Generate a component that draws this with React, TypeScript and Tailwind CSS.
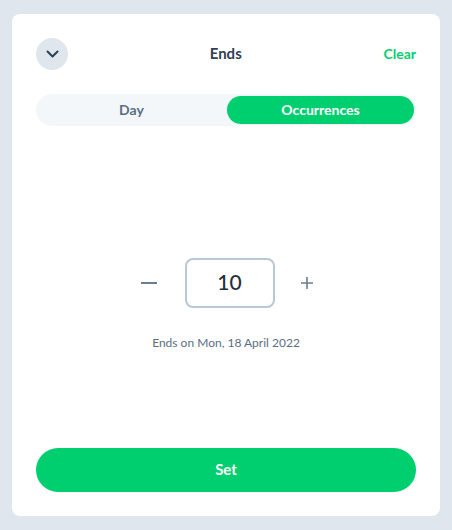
import React, { useState } from 'react';

const App: React.FC = () => {
  const [mode, setMode] = useState<'day' | 'occurrences'>('occurrences');
  const [count, setCount] = useState(10);

  return (
    <div
      className="min-h-screen bg-[#dfe6ee] px-3 py-[14px]"
      style={{ fontFamily: 'Lato, "Open Sans", sans-serif' }}
    >
      <div className="flex h-[502px] flex-col rounded-lg bg-white p-6">
        {/* Header */}
        <div className="flex h-8 items-center justify-between">
          <button className="flex h-8 w-8 items-center justify-center rounded-full bg-[#dfe6ee]">
            <svg width="13" height="8" viewBox="0 0 13 8" fill="none" stroke="#2f4054" strokeWidth="2" strokeLinecap="round" strokeLinejoin="round">
              <path d="M1.5 1.5l5 5 5-5" />
            </svg>
          </button>
          <h2 className="-mt-0.5 text-[15px] font-bold text-[#2f4054]">Ends</h2>
          <button className="-mt-0.5 text-[14px] font-bold text-[#00cf6f]">Clear</button>
        </div>

        {/* Toggle */}
        <div className="mt-6 flex h-8 rounded-full bg-[#f3f7fa] p-0.5">
          <button
            onClick={() => setMode('day')}
            className={`flex-1 rounded-full pb-0.5 text-[14px] font-bold ${
              mode === 'day' ? 'bg-[#00cf6f] text-white' : 'text-[#5b6e82]'
            }`}
          >
            Day
          </button>
          <button
            onClick={() => setMode('occurrences')}
            className={`ml-0.5 flex-1 rounded-full pb-0.5 text-[14px] font-bold ${
              mode === 'occurrences' ? 'bg-[#00cf6f] text-white' : 'text-[#5b6e82]'
            }`}
          >
            Occurrences
          </button>
        </div>

        {/* Stepper */}
        <div className="mt-[132px] flex items-center justify-center pl-px">
          <button onClick={() => setCount(Math.max(1, count - 1))} className="flex h-8 w-4 items-center justify-center">
            <span className="block h-[2px] w-4 bg-[#6b7d90]" />
          </button>
          <div className="ml-7 mr-[26px] flex h-[50px] w-[90px] items-center justify-center rounded-lg border-2 border-[#b8c9d6] pb-0.5 text-[21px] font-medium text-[#1f2d3d]">
            {count}
          </div>
          <button onClick={() => setCount(count + 1)} className="flex h-8 w-3 items-center justify-center">
            <svg width="12" height="12" viewBox="0 0 12 12" stroke="#6b7d90" strokeWidth="1.6">
              <path d="M6 0v12M0 6h12" />
            </svg>
          </button>
        </div>
        <p className="mt-[26px] text-center text-[12px] text-[#5b6e82]">Ends on Mon, 18 April 2022</p>

        <div className="flex-1" />

        <button className="h-11 w-full rounded-full bg-[#00cf6f] pb-0.5 text-[15px] font-bold text-white">Set</button>
      </div>
    </div>
  );
};

export default App;
